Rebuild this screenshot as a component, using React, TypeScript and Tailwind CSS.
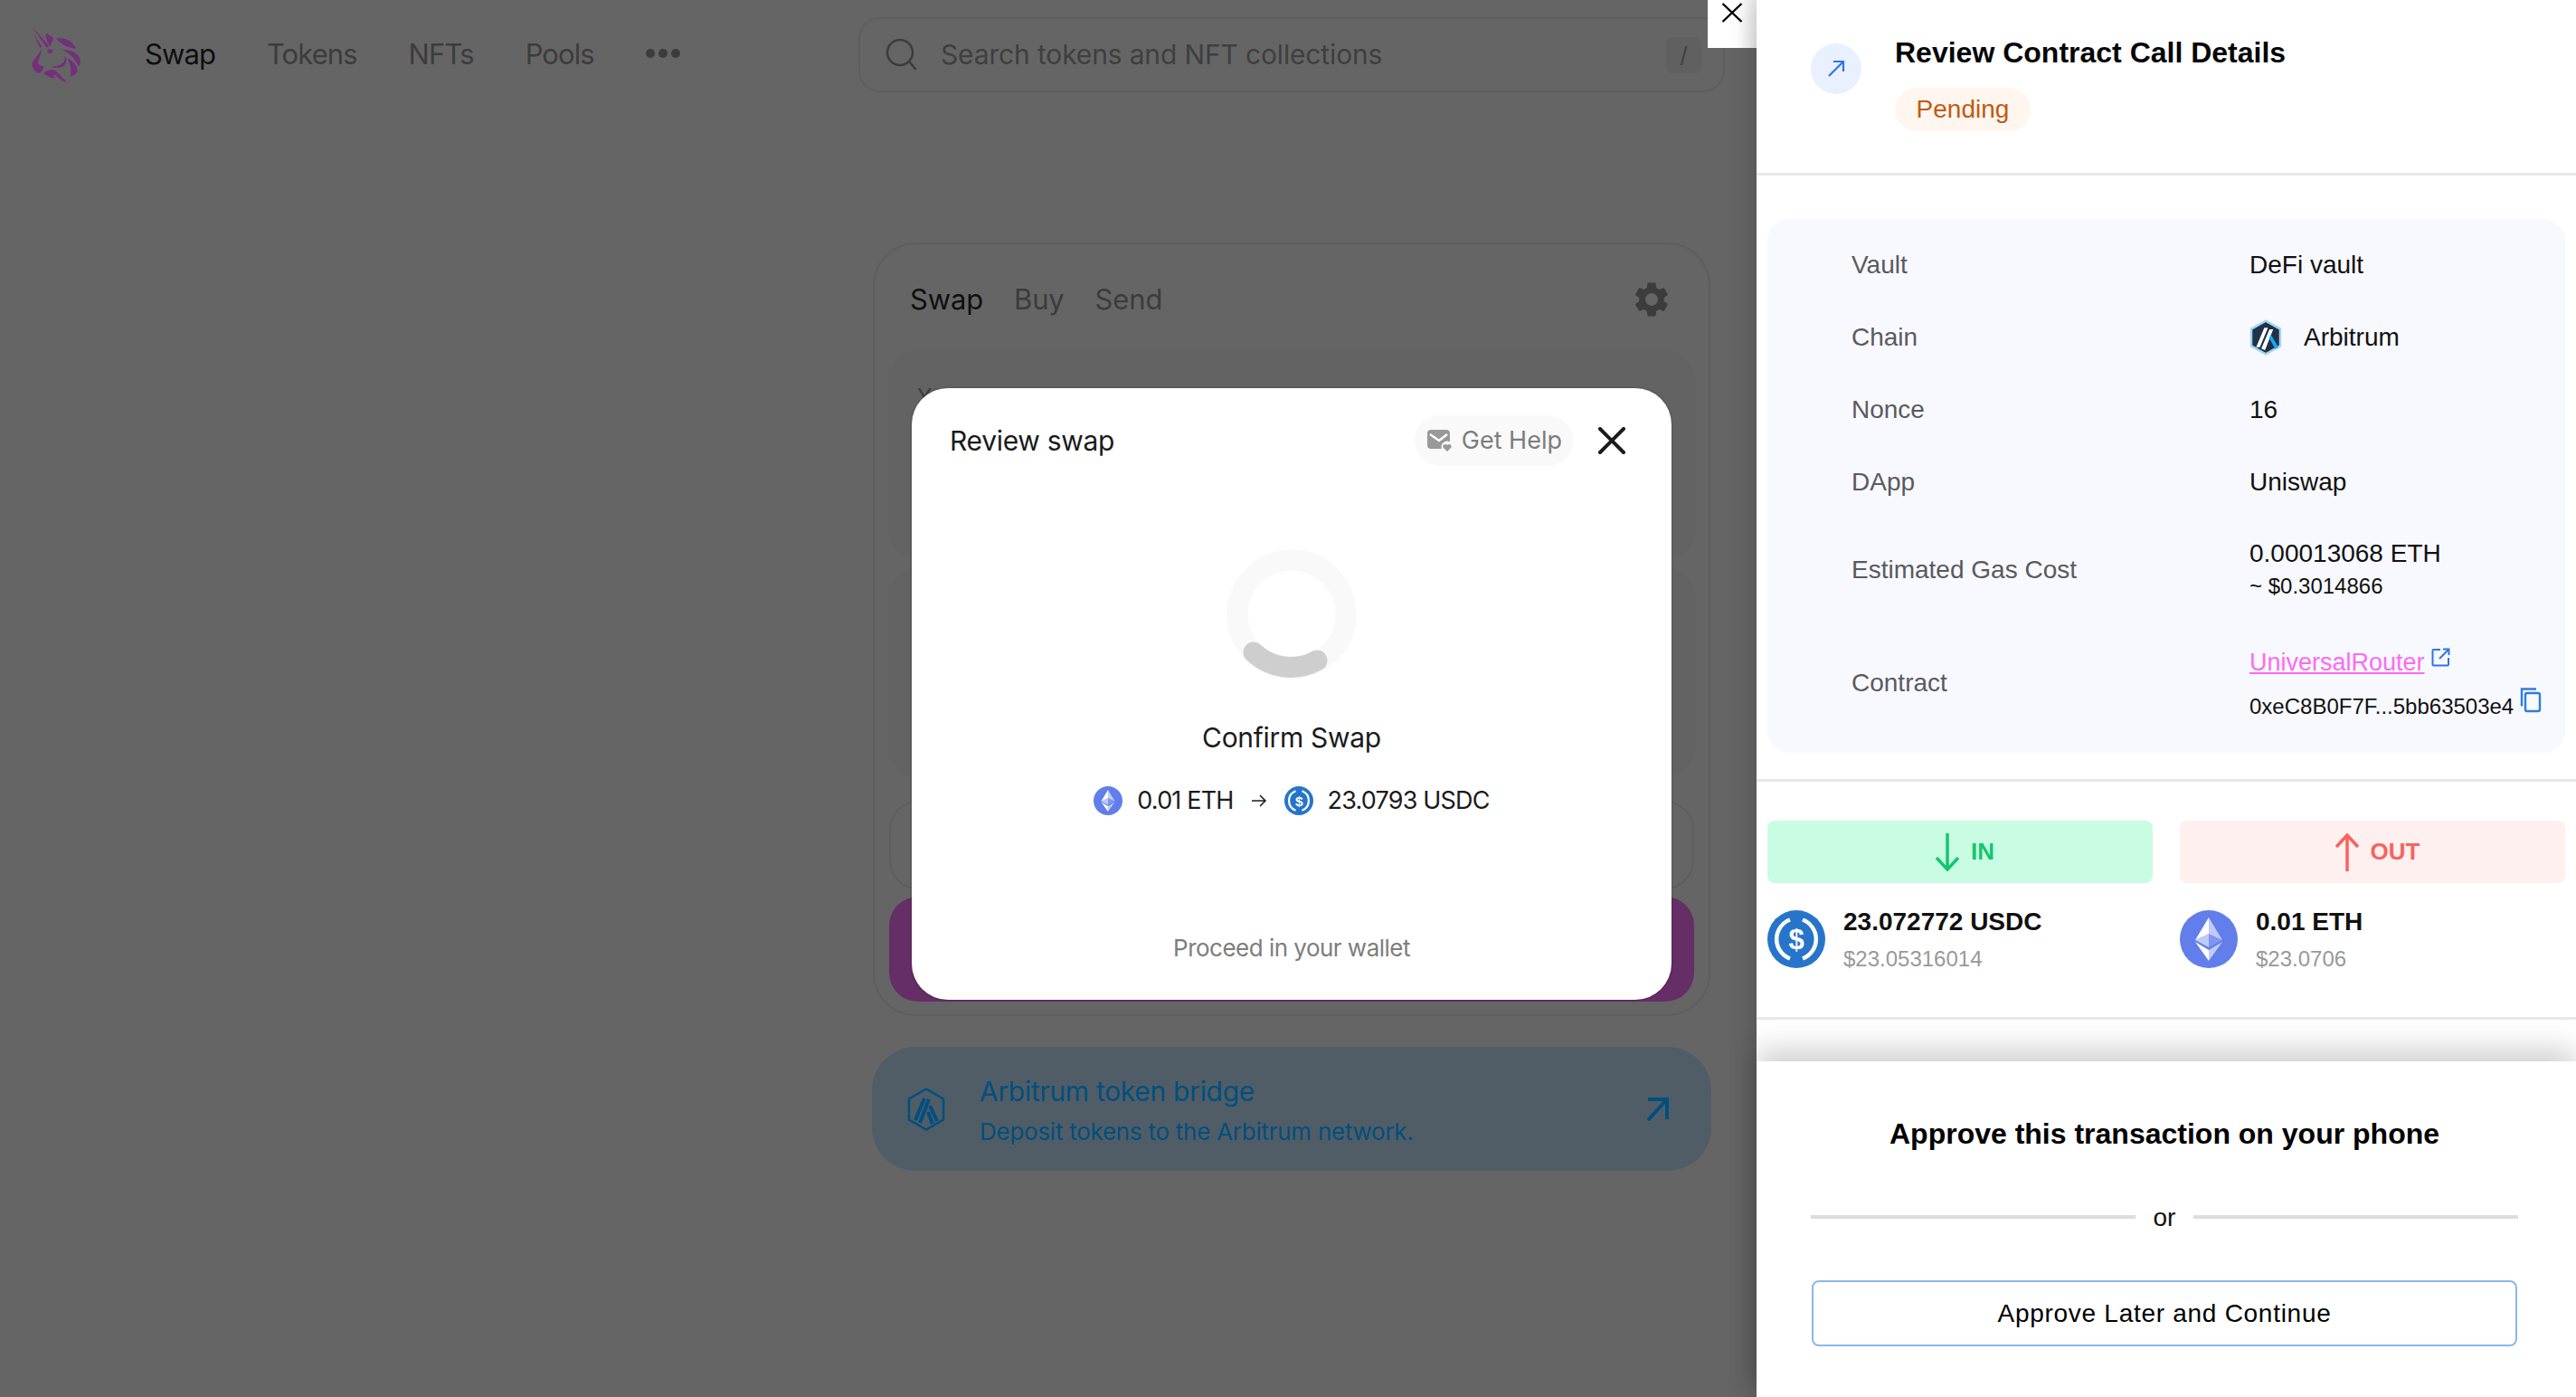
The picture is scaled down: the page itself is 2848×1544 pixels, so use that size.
import { MdSettings } from "react-icons/md";

const sans = "font-['Liberation_Sans',Arial,sans-serif]";
const ui = "font-['Inter',sans-serif]";

function UniswapLogo() {
  return (
    <svg width="60" height="67" viewBox="95 25 180 200" fill="#74307a" className="shrink-0">
      <path d="M105 32 162 96l-8 6zM112 58l26 40-6 4z" />
      <path d="M150 55c12 2 20 8 26 15l-10 27c-8-8-14-22-16-42z" />
      <path d="M185 72c28-6 56 8 66 33-20-2-46-10-66-33z" />
      <path d="M203 108c26 0 54 8 62 32 2 8 0 16-6 24-8-24-30-44-56-56z" />
      <path d="M222 138c20 8 34 22 34 40-2 8-10 16-24 20 4-20 2-40-10-60z" />
      <path d="M136 106c-6 16-20 28-30 44-4 14 6 30 20 36 12-2 18-12 18-22-12-2-22-8-18-20 4-12 12-24 10-38z" />
      <ellipse cx="165" cy="113" rx="9" ry="7" />
      <path d="M168 166c18-2 34-8 42-16 4-6 4-14 3-22 8 10 8 24 0 32-10 8-28 10-45 6z" />
      <path d="M143 186c10-8 24-14 36-10 14 6 18 20 42 38-18 0-26-10-34-18-4-4-10-6-12-2 0 4 6 6 10 6-12 6-28-2-42-14z" />
    </svg>
  );
}

function EthIcon({ size }: { size: number }) {
  return (
    <svg width={size} height={size} viewBox="0 0 64 64" className="shrink-0">
      <circle cx="32" cy="32" r="32" fill="#627eea" />
      <path d="M32 8v18l15 7z" fill="#fff" fillOpacity="0.6" />
      <path d="M32 8 17 33l15-7z" fill="#fff" />
      <path d="M32 44v12l15-21z" fill="#fff" fillOpacity="0.6" />
      <path d="M32 44v12L17 35z" fill="#fff" />
      <path d="M32 41l15-8-15-7z" fill="#fff" fillOpacity="0.2" />
      <path d="M17 33l15 8V26z" fill="#fff" fillOpacity="0.6" />
    </svg>
  );
}

function UsdcIcon({ size }: { size: number }) {
  return (
    <svg width={size} height={size} viewBox="0 0 64 64" className="shrink-0">
      <circle cx="32" cy="32" r="32" fill="#2775ca" />
      <path d="M25 10.500a23 23 0 0 0 0 43" fill="none" stroke="#fff" strokeWidth="4.500" />
      <path d="M39 10.500a23 23 0 0 1 0 43" fill="none" stroke="#fff" strokeWidth="4.500" />
      <text x="32" y="43" textAnchor="middle" fontSize="31" fontWeight="700" fill="#fff" fontFamily="Liberation Sans">
        $
      </text>
    </svg>
  );
}

function ArbitrumMark() {
  return (
    <svg width="36" height="40" viewBox="0 0 44 48" className="shrink-0">
      <path d="M22 1.500 41.500 12.500v23L22 46.500 2.500 35.500v-23z" fill="#213147" stroke="#a3d4f2" strokeWidth="3" />
      <path d="M9 37 20 11h5L14 37zM16 39 27 13h5L21 41z" fill="#fff" />
      <path d="M29 20 39 37l-4 2.500-8.500-15z" fill="#12aaff" />
    </svg>
  );
}

function NavItem({ label, active }: { label: string; active?: boolean }) {
  return <span className={active ? "text-[#0f0f0f]" : "text-[#3c3c3c]"}>{label}</span>;
}

function SwapBackdrop() {
  return (
    <div className={`relative flex h-[1544px] w-[1942px] shrink-0 flex-col bg-[#666566] ${ui}`}>
      <header className="flex h-[121px] shrink-0 items-center pl-8">
        <UniswapLogo />
        <nav className="ml-[68px] flex items-center gap-[57px] text-[31px] tracking-[-0.03em]">
          <NavItem label="Swap" active />
          <NavItem label="Tokens" />
          <NavItem label="NFTs" />
          <NavItem label="Pools" />
          <span className="mb-1 flex gap-[4px]">
            <i className="size-[10px] rounded-full bg-[#3c3c3c]" />
            <i className="size-[10px] rounded-full bg-[#3c3c3c]" />
            <i className="size-[10px] rounded-full bg-[#3c3c3c]" />
          </span>
        </nav>
        <div className="absolute left-[949px] top-[19px] flex h-[83px] w-[958px] items-center rounded-[24px] border-2 border-[#5f5e5f] pl-7 pr-6">
          <svg width="36" height="36" viewBox="0 0 36 36" fill="none" stroke="#3c3c3c" strokeWidth="2.500" strokeLinecap="round">
            <circle cx="16" cy="15" r="14" />
            <path d="M26 25l7 8" />
          </svg>
          <span className="ml-[25px] flex-1 text-[30px] tracking-[-0.005em] text-[#3f3f3f]">Search tokens and NFT collections</span>
          <span className="flex h-[40px] w-[39px] items-center justify-center rounded-lg bg-[#606060] text-[24px] text-[#3f3f3f]">/</span>
        </div>
      </header>

      <section className="ml-[965px] mt-[147px] flex h-[855px] w-[926px] shrink-0 flex-col rounded-[48px] border-2 border-[#5f5e5f] px-4">
        <div className="flex h-[117px] shrink-0 items-center pl-[23px] pr-6 pt-[5px] text-[31px] tracking-[-0.005em]">
          <span className="text-[#0f0f0f]">Swap</span>
          <span className="ml-[34px] text-[#3c3c3c]">Buy</span>
          <span className="ml-[34px] text-[#3c3c3c]">Send</span>
          <MdSettings className="ml-auto size-[46px] text-[#3c3c3c]" />
        </div>
        <div className="h-[232px] shrink-0 rounded-[32px] bg-[#646364] px-[31px] pt-[36px] text-[24px] leading-[32px] text-[#3c3c3c]">You pay</div>
        <div className="mt-2 h-[232px] shrink-0 rounded-[32px] bg-[#646364]" />
        <div className="mt-[26px] h-[98px] shrink-0 rounded-[32px] border-2 border-[#5f5e5f]" />
        <div className="mt-2 h-[116px] shrink-0 rounded-[32px] bg-[#652e66]" />
      </section>

      <section className="ml-[964px] mt-[34px] flex h-[137px] w-[928px] shrink-0 items-center rounded-[48px] bg-[#515d66] pl-[38px] pr-[47px] text-[#004f80]">
        <svg width="44" height="48" viewBox="0 0 44 48" fill="none" stroke="#004f80" strokeWidth="2.500">
          <path d="M22 1.500 41 12.500v23L22 46.500 3 35.500v-23z" />
          <path d="M10 36 20 12M15 39 25 13M26 20l8 17M24 27l5 13" strokeWidth="4" />
        </svg>
        <div className="ml-[37px] mt-[6px] flex flex-col gap-[9px]">
          <span className="text-[30px] leading-[36px] tracking-[-0.01em]">Arbitrum token bridge</span>
          <span className="text-[26px] leading-[36px] tracking-[-0.01em]">Deposit tokens to the Arbitrum network.</span>
        </div>
        <svg className="ml-auto" width="26" height="26" viewBox="0 0 26 26" fill="none" stroke="#004f80" strokeWidth="4">
          <path d="M3 2h21v22M24 2 3 25" />
        </svg>
      </section>

      <ReviewModal />

      <button className="absolute right-0 top-0 flex h-[53px] w-[54px] justify-center bg-gradient-to-r from-white from-60% to-[#ececec] pt-[2px]">
        <svg width="24" height="24" viewBox="0 0 24 24" fill="none" stroke="#000" strokeWidth="2.400">
          <path d="M1.500 2 22.500 22M22.500 2 1.500 22" />
        </svg>
      </button>
    </div>
  );
}

function ReviewModal() {
  return (
    <div className="absolute left-[1008px] top-[429px] flex h-[676px] w-[840px] flex-col items-center rounded-[40px] bg-white text-[#1b1b1b] shadow-[0_0_3px_rgba(0,0,0,0.3)]">
      <div className="flex h-[116px] w-full shrink-0 items-center pl-[42px] pr-[51px]">
        <span className="text-[30px] tracking-[-0.01em]">Review swap</span>
        <span className="ml-auto flex h-[56px] items-center rounded-full bg-[#f9f9f9] pl-[14px] pr-[12px] text-[27px] text-[#7d7d7d]">
          <svg width="28" height="26" viewBox="0 0 28 26">
            <rect x="0" y="1" width="25" height="21" rx="4" fill="#999" />
            <path d="M3 6l10 7 9-7" fill="none" stroke="#fff" strokeWidth="2.500" />
            <circle cx="22" cy="20" r="6.500" fill="#f9f9f9" />
            <path d="M22 25l-4.500-4.500a2.600 2.600 0 0 1 4.500-2.500 2.600 2.600 0 0 1 4.500 2.500z" fill="#999" />
          </svg>
          <span className="ml-[10px]">Get Help</span>
        </span>
        <svg className="ml-[28px]" width="30" height="30" viewBox="0 0 30 30" fill="none" stroke="#1b1b1b" strokeWidth="4" strokeLinecap="round">
          <path d="M2 2l26 26M28 2 2 28" />
        </svg>
      </div>

      <svg className="mt-[62px] shrink-0" width="144" height="144" viewBox="0 0 144 144" fill="none" strokeWidth="23">
        <circle cx="72" cy="72" r="60" stroke="#f9f9f9" />
        <path d="M30 114a60 60 0 0 0 70 9" stroke="#cecece" strokeLinecap="round" />
      </svg>

      <div className="mt-[44px] text-[30px] leading-[40px] tracking-[-0.01em]">Confirm Swap</div>
      <div className="mt-[34px] flex h-[32px] items-center text-[27px] tracking-[-0.03em]">
        <EthIcon size={32} />
        <span className="ml-4">0.01 ETH</span>
        <svg className="mx-[19px]" width="18" height="16" viewBox="0 0 18 16" fill="none" stroke="#1b1b1b" strokeWidth="1.500">
          <path d="M1 8h15M10 2l6 6-6 6" />
        </svg>
        <UsdcIcon size={32} />
        <span className="ml-4">23.0793 USDC</span>
      </div>
      <div className="mb-[40px] mt-auto text-[26px] leading-[34px] tracking-[-0.02em] text-[#7d7d7d]">Proceed in your wallet</div>
    </div>
  );
}

function DetailRow({ label, children, className }: { label: string; children: React.ReactNode; className: string }) {
  return (
    <div className={`flex shrink-0 items-center ${className}`}>
      <span className="w-[440px] shrink-0 text-[#5a5a5f]">{label}</span>
      <div className="flex min-w-0 flex-col text-[#111]">{children}</div>
    </div>
  );
}

function ExternalIcon() {
  return (
    <svg className="mb-[15px] ml-[7px]" width="21" height="21" viewBox="0 0 21 21" fill="none" stroke="#2f73f0" strokeWidth="2">
      <path d="M10 2H2.500a1 1 0 0 0-1 1v15.500a1 1 0 0 0 1 1H18a1 1 0 0 0 1-1V11M9 12 19.500 1.500M13 1.500h6.500V8" />
    </svg>
  );
}

function CopyIcon() {
  return (
    <svg className="mb-[11px] ml-[7px]" width="24" height="28" viewBox="0 0 24 28" fill="none" stroke="#2e7de0" strokeWidth="2.400">
      <path d="M18 1.500H2v19" />
      <rect x="6" y="6" width="16" height="20" rx="2" />
    </svg>
  );
}

function TokenAmount({ icon, amount, usd }: { icon: React.ReactNode; amount: string; usd: string }) {
  return (
    <div className="flex w-[426px] gap-5 pt-[30px]">
      {icon}
      <div className="-mt-[3px] flex flex-col">
        <span className="text-[28px] font-bold leading-[32px] text-[#111]">{amount}</span>
        <span className="mt-[9px] text-[24px] leading-[32px] text-[#999]">{usd}</span>
      </div>
    </div>
  );
}

function ReviewPanel() {
  return (
    <aside className={`relative flex h-[1544px] flex-1 flex-col bg-white shadow-[0_0_28px_rgba(0,0,0,0.22)] ${sans}`}>
      <header className="flex h-[194px] shrink-0 items-start border-b-[3px] border-[#e8e8e8] pl-[60px] pt-[38px]">
        <span className="mt-[10px] flex size-[56px] items-center justify-center rounded-full bg-[#e9f0ff]">
          <svg width="20" height="20" viewBox="0 0 20 20" fill="none" stroke="#2f73f0" strokeWidth="2.200">
            <path d="M2 18 18 2M7 2h11v11" />
          </svg>
        </span>
        <div className="ml-[37px] flex flex-col items-start">
          <h1 className="text-[32px] font-bold leading-[40px] text-[#060606]">Review Contract Call Details</h1>
          <span className="mt-[19px] flex h-[48px] w-[150px] items-center justify-center rounded-full bg-[#fff6f0] text-[28px] text-[#c4590f]">Pending</span>
        </div>
      </header>

      <section className="mx-3 mt-[48px] flex h-[590px] shrink-0 flex-col rounded-[24px] bg-[#f8f9fe] pl-[93px] pt-[11px] text-[28px]">
        <DetailRow label="Vault" className="h-[80px]"><span>DeFi vault</span></DetailRow>
        <DetailRow label="Chain" className="h-[80px]">
          <span className="flex items-center gap-[24px]">
            <ArbitrumMark />
            Arbitrum
          </span>
        </DetailRow>
        <DetailRow label="Nonce" className="h-[80px]"><span>16</span></DetailRow>
        <DetailRow label="DApp" className="h-[80px]"><span>Uniswap</span></DetailRow>
        <DetailRow label="Estimated Gas Cost" className="h-[114px]">
          <span className="leading-[32px]">0.00013068 ETH</span>
          <span className="mt-[4px] text-[24px] leading-[32px]">~ $0.3014866</span>
        </DetailRow>
        <DetailRow label="Contract" className="h-[136px]">
          <span className="flex items-end">
            <span className="text-[27px] leading-[40px] text-[#fb6bf5] underline">UniversalRouter</span>
            <ExternalIcon />
          </span>
          <span className="mt-2 flex items-end text-[24px] leading-[36px]">
            0xeC8B0F7F...5bb63503e4
            <CopyIcon />
          </span>
        </DetailRow>
      </section>

      <div className="mt-[29px] h-[3px] shrink-0 bg-[#e8e8e8]" />

      <section className="mx-3 mt-[43px] grid h-[163px] shrink-0 grid-cols-[426px_426px] gap-x-[30px]">
        <div>
          <div className="flex h-[69px] items-center justify-center gap-3 rounded-lg bg-[#c9fde3] pl-[10px] text-[26px] font-bold text-[#15c66e]">
            <svg width="28" height="42" viewBox="0 0 28 42" fill="none" stroke="#15c66e" strokeWidth="3.500">
              <path d="M14 0v39M2 27l12 13 12-13" />
            </svg>
            IN
          </div>
          <TokenAmount icon={<UsdcIcon size={64} />} amount="23.072772 USDC" usd="$23.05316014" />
        </div>
        <div>
          <div className="flex h-[69px] items-center justify-center gap-3 rounded-lg bg-[#fff0f0] pl-[10px] text-[26px] font-bold text-[#f7635c]">
            <svg width="28" height="42" viewBox="0 0 28 42" fill="none" stroke="#f7635c" strokeWidth="3.500">
              <path d="M14 42V3M2 15 14 2l12 13" />
            </svg>
            OUT
          </div>
          <TokenAmount icon={<EthIcon size={64} />} amount="0.01 ETH" usd="$23.0706" />
        </div>
      </section>

      <div className="mt-[54px] h-[3px] shrink-0 bg-[#e8e8e8]" />

      <footer className="mt-[46px] flex flex-1 flex-col items-center bg-white pl-[60px] pr-[64px] shadow-[0_-14px_30px_rgba(0,0,0,0.18)]">
        <h2 className="mt-[60px] text-[32px] font-bold leading-[40px] text-black">Approve this transaction on your phone</h2>
        <div className="mt-[54px] flex w-full items-center gap-5 text-[28px] text-[#111]">
          <i className="h-[4px] flex-1 bg-[#dddddd]" />
          <span className="pt-[2px] leading-[34px]">or</span>
          <i className="h-[4px] flex-1 bg-[#dddddd]" />
        </div>
        <button className="mt-[52px] h-[73px] w-[780px] shrink-0 rounded-lg border-2 border-[#8ab8e8] text-[28px] tracking-[0.72px] text-black">
          Approve Later and Continue
        </button>
      </footer>
    </aside>
  );
}

export default function App() {
  return (
    <div className="flex h-[1544px] w-[2848px] overflow-hidden">
      <SwapBackdrop />
      <ReviewPanel />
    </div>
  );
}
